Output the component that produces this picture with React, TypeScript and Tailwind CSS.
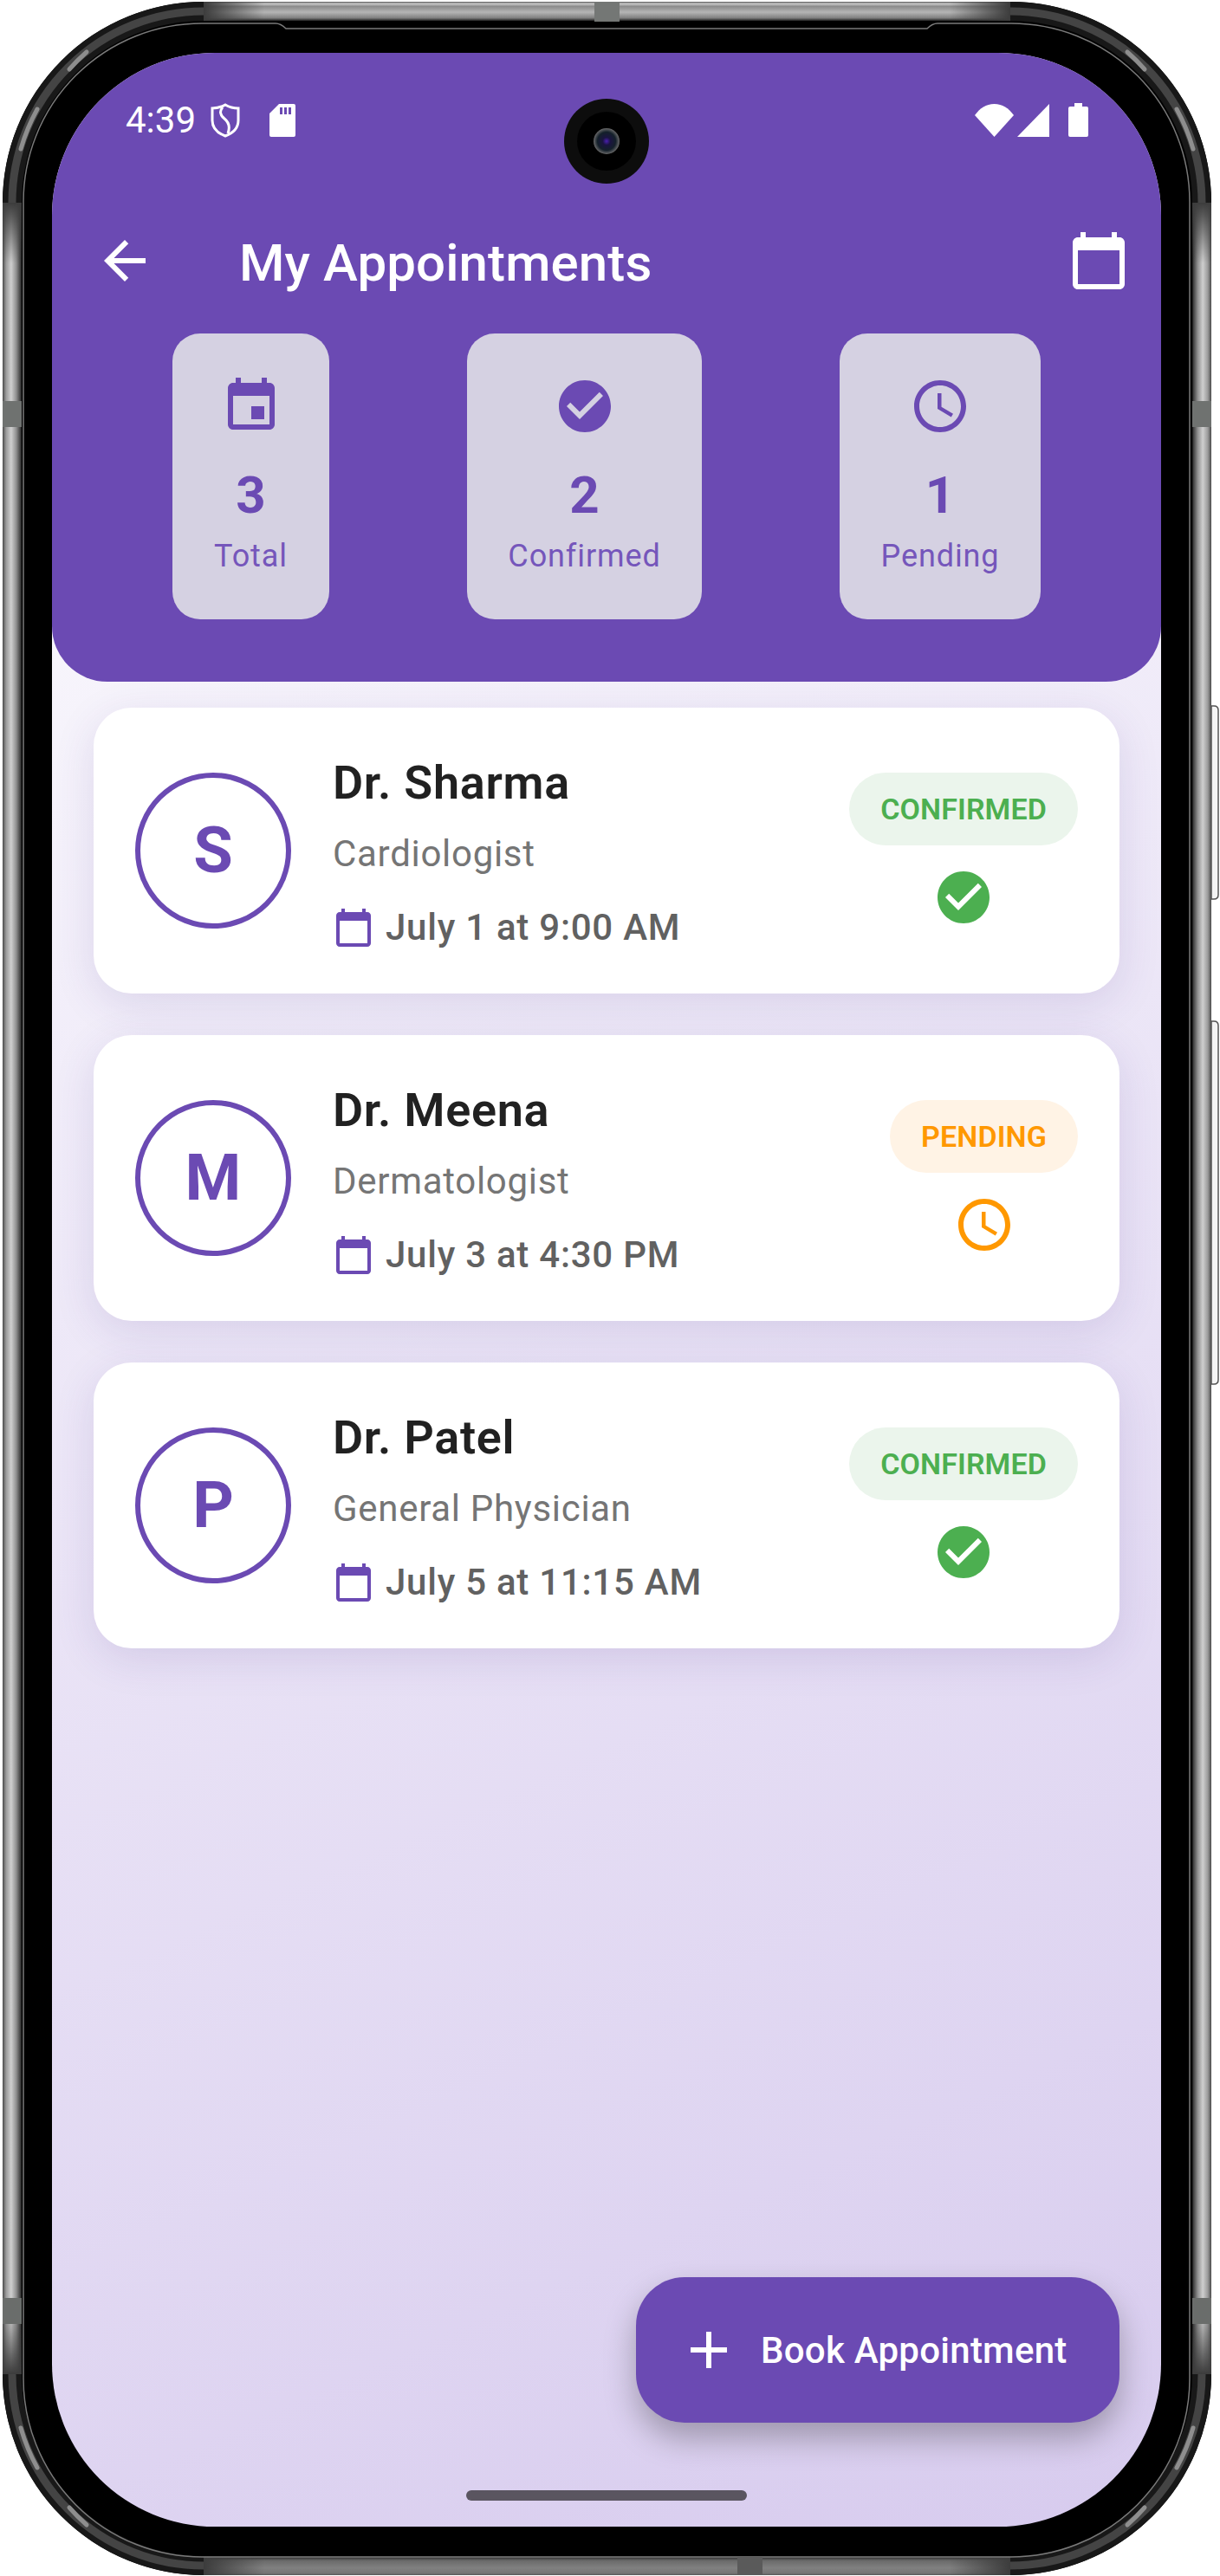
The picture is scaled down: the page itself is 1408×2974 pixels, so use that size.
import React from "react";

const P = {
  cal: "M20 3h-1V1h-2v2H7V1H5v2H4c-1.1 0-2 .9-2 2v16c0 1.1.9 2 2 2h16c1.1 0 2-.9 2-2V5c0-1.1-.9-2-2-2zm0 18H4V8h16v13z",
  event: "M17 12h-5v5h5v-5zM16 1v2H8V1H6v2H5c-1.11 0-1.99.9-1.99 2L3 19c0 1.1.89 2 2 2h14c1.1 0 2-.9 2-2V5c0-1.1-.9-2-2-2h-1V1h-2zm3 18H5V8h14v11z",
  check: "M12 2C6.48 2 2 6.48 2 12s4.48 10 10 10 10-4.48 10-10S17.52 2 12 2zm-2 15l-5-5 1.41-1.41L10 14.17l7.59-7.59L19 8l-9 9z",
  clock: "M11.99 2C6.47 2 2 6.48 2 12s4.47 10 9.99 10C17.52 22 22 17.52 22 12S17.52 2 11.99 2zM12 20c-4.42 0-8-3.58-8-8s3.58-8 8-8 8 3.58 8 8-3.58 8-8 8zm.5-13H11v6l5.25 3.15.75-1.23-4.5-2.67z",
  back: "M20 11H7.83l5.59-5.59L12 4l-8 8 8 8 1.41-1.41L7.83 13H20v-2z",
  add: "M19 13h-6v6h-2v-6H5v-2h6V5h2v6h6v2z",
};

function Icon({ d, size, className }: { d: string; size: number; className?: string }) {
  return (
    <svg width={size} height={size} viewBox="0 0 24 24" fill="currentColor" className={className}>
      <path d={d} />
    </svg>
  );
}

function Frame() {
  const corners = [
    "",
    "translate(1401 0) scale(-1 1)",
    "translate(0 2975) scale(1 -1)",
    "translate(1401 2975) scale(-1 -1)",
  ];
  const fade = "#3c3c3c";
  return (
    <svg width="1408" height="2974" viewBox="0 0 1408 2974" className="absolute left-0 top-0">
      <defs>
        <linearGradient id="hL" x1="0" x2="1" y1="0" y2="0">
          <stop offset="0" stopColor="#4a4a4a" />
          <stop offset="0.18" stopColor="#9a9a9a" />
          <stop offset="0.45" stopColor="#cfcfcf" />
          <stop offset="0.72" stopColor="#8f8f8f" />
          <stop offset="0.95" stopColor="#3a3a3a" />
          <stop offset="1" stopColor="#111111" />
        </linearGradient>
        <linearGradient id="hR" x1="1" x2="0" y1="0" y2="0">
          <stop offset="0" stopColor="#4a4a4a" />
          <stop offset="0.18" stopColor="#9a9a9a" />
          <stop offset="0.45" stopColor="#cfcfcf" />
          <stop offset="0.72" stopColor="#8f8f8f" />
          <stop offset="0.95" stopColor="#3a3a3a" />
          <stop offset="1" stopColor="#111111" />
        </linearGradient>
        <linearGradient id="vT" x1="0" x2="0" y1="0" y2="1">
          <stop offset="0" stopColor="#555555" />
          <stop offset="0.1" stopColor="#c8c8c8" />
          <stop offset="0.25" stopColor="#8c8c8c" />
          <stop offset="0.55" stopColor="#b5b5b5" />
          <stop offset="0.85" stopColor="#808080" />
          <stop offset="1" stopColor="#222222" />
        </linearGradient>
        <linearGradient id="vB" x1="0" x2="0" y1="0" y2="1">
          <stop offset="0" stopColor="#2a2a2a" />
          <stop offset="0.2" stopColor="#6a6a6a" />
          <stop offset="0.6" stopColor="#808080" />
          <stop offset="0.9" stopColor="#757575" />
          <stop offset="1" stopColor="#555555" />
        </linearGradient>
        <linearGradient id="fadeDown" x1="0" x2="0" y1="0" y2="1">
          <stop offset="0" stopColor={fade} />
          <stop offset="1" stopColor={fade} stopOpacity="0" />
        </linearGradient>
        <linearGradient id="fadeUp" x1="0" x2="0" y1="1" y2="0">
          <stop offset="0" stopColor={fade} />
          <stop offset="1" stopColor={fade} stopOpacity="0" />
        </linearGradient>
        <linearGradient id="fadeRight" x1="0" x2="1" y1="0" y2="0">
          <stop offset="0" stopColor={fade} />
          <stop offset="1" stopColor={fade} stopOpacity="0" />
        </linearGradient>
        <linearGradient id="fadeLeft" x1="1" x2="0" y1="0" y2="0">
          <stop offset="0" stopColor={fade} />
          <stop offset="1" stopColor={fade} stopOpacity="0" />
        </linearGradient>
        <radialGradient id="lens">
          <stop offset="0" stopColor="#4a1fb0" />
          <stop offset="0.3" stopColor="#1a1440" />
          <stop offset="0.7" stopColor="#14202a" />
          <stop offset="1" stopColor="#6a6a6a" />
        </radialGradient>
      </defs>
      <path d="M1398 815h3q5 0 5 5v213q0 5-5 5h-3z" fill="#f4f4f4" stroke="#555" strokeWidth="1.5" />
      <path d="M1398 1179h3q5 0 5 5v409q0 5-5 5h-3z" fill="#f4f4f4" stroke="#555" strokeWidth="1.5" />
      <rect x="3" y="2" width="1395" height="2971" rx="232" fill="#000000" />
      <rect x="14" y="13" width="1373" height="2949" rx="221" fill="none" stroke="#181818" strokeWidth="22" />
      <rect x="14" y="13" width="1373" height="2949" rx="221" fill="none" stroke="#444444" strokeWidth="9" />
      <rect x="3" y="234" width="22" height="2507" fill="url(#hL)" />
      <rect x="1376" y="234" width="22" height="2507" fill="url(#hR)" />
      <rect x="235" y="2" width="931" height="22" fill="url(#vT)" />
      <rect x="235" y="2952" width="931" height="21" fill="url(#vB)" />
      <rect x="3" y="234" width="22" height="70" fill="url(#fadeDown)" />
      <rect x="1376" y="234" width="22" height="70" fill="url(#fadeDown)" />
      <rect x="3" y="2671" width="22" height="70" fill="url(#fadeUp)" />
      <rect x="1376" y="2671" width="22" height="70" fill="url(#fadeUp)" />
      <rect x="235" y="2" width="70" height="22" fill="url(#fadeRight)" />
      <rect x="1096" y="2" width="70" height="22" fill="url(#fadeLeft)" />
      <rect x="235" y="2952" width="70" height="21" fill="url(#fadeRight)" />
      <rect x="1096" y="2952" width="70" height="21" fill="url(#fadeLeft)" />
      {corners.map((t) => (
        <g key={t} transform={t} fill="none" stroke="#8e8e8e" strokeWidth="5" strokeLinecap="round">
          <path d="M24 172 A221 221 0 0 1 43 126" />
          <path d="M80 80 A221 221 0 0 1 100 60" />
        </g>
      ))}
      <path
        d="M27 233A206 206 0 0 1 233 27H318Q324 27 330 33H1070Q1076 27 1082 27H1167A206 206 0 0 1 1373 233V2746A206 206 0 0 1 1167 2952H233A206 206 0 0 1 27 2746Z"
        fill="none"
        stroke="#7a7a7a"
        strokeWidth="1.5"
      />
      <rect x="686" y="2" width="29" height="23" fill="#747775" />
      <rect x="851" y="2952" width="29" height="21" fill="#5a5a5a" />
      <rect x="3" y="463" width="22" height="30" fill="#6f7270" />
      <rect x="1376" y="463" width="22" height="30" fill="#6f7270" />
      <rect x="3" y="2653" width="22" height="30" fill="#6a6d6b" />
      <rect x="1376" y="2653" width="22" height="30" fill="#6a6d6b" />
    </svg>
  );
}

function Stat({ icon, value, label, w }: { icon: string; value: string; label: string; w: string }) {
  return (
    <div className={`flex h-[330px] flex-col items-center rounded-[32px] bg-[#d5d1e2] pt-[48px] text-[#6b4ab3] ${w}`}>
      <Icon d={icon} size={72} />
      <div className="mt-[32px] text-[60px] font-bold leading-[70px]">{value}</div>
      <div className="mt-[14px] text-[36px] leading-[42px] tracking-[0.9px] text-[#7556bb]">{label}</div>
    </div>
  );
}

function Appointment({
  initial,
  name,
  spec,
  date,
  status,
}: {
  initial: string;
  name: string;
  spec: string;
  date: string;
  status: "CONFIRMED" | "PENDING";
}) {
  const ok = status === "CONFIRMED";
  return (
    <div className="flex h-[330px] items-center rounded-[44px] bg-white px-[48px] shadow-[0_12px_48px_rgba(70,50,140,0.13)]">
      <div className="flex h-[180px] w-[180px] shrink-0 items-center justify-center rounded-full border-[6px] border-[#6b4ab3] text-[74px] font-bold leading-none text-[#6b4ab3]">
        {initial}
      </div>
      <div className="ml-[48px] flex h-[234px] flex-1 flex-col">
        <div className="mt-[7px] text-[54px] font-semibold leading-[63px] tracking-[0.7px] text-[#212121]">{name}</div>
        <div className="mt-[26px] text-[42px] leading-[49px] tracking-[0.7px] text-[#757575]">{spec}</div>
        <div className="mt-[36px] flex items-center text-[42px] font-medium leading-[49px] tracking-[0.75px] text-[#616161]">
          <Icon d={P.cal} size={48} className="mr-[13px] text-[#6b4ab3]" />
          {date}
        </div>
      </div>
      <div className="flex flex-col items-center">
        <div
          className={`flex h-[84px] items-center rounded-[42px] px-[36px] text-[34px] font-semibold tracking-[0.1px] ${
            ok ? "bg-[#ebf5ec] text-[#4caf50]" : "bg-[#fff3e5] text-[#ff9800]"
          }`}
        >
          {status}
        </div>
        <Icon d={ok ? P.check : P.clock} size={72} className={`mt-[24px] ${ok ? "text-[#4caf50]" : "text-[#ff9800]"}`} />
      </div>
    </div>
  );
}

export default function App() {
  return (
    <div className="relative h-[2974px] w-[1408px] overflow-hidden bg-white font-['Roboto',sans-serif]">
      <Frame />
      <div className="relative pl-[60px] pt-[61px]">
        <div className="relative flex h-[2856px] w-[1280px] flex-col overflow-hidden rounded-[188px] bg-[linear-gradient(155.9deg,#ffffff_0%,#d7cbee_100%)]">
          <div className="h-[726px] shrink-0 rounded-b-[64px] bg-[#6b4ab3] text-white">
            <div className="flex h-[204px] items-start justify-between pl-[85px] pr-[84px] pt-[58px]">
              <div className="-mt-[5px] flex items-center">
                <span className="text-[42px] leading-[49px]">4:39</span>
                <svg width="34" height="40" viewBox="0 0 34 40" className="ml-[17px]" fill="none" stroke="white" strokeWidth="3">
                  <path d="M17 2c5 3 10 4 15 4v14c0 9-7 15-15 18C9 35 2 29 2 20V6c5 0 10-1 15-4z" />
                  <path d="M14 5c-4 4-3 9 2 13 5 4 7 9 4 17" />
                </svg>
                <svg width="30" height="38" viewBox="0 0 30 38" className="ml-[34px]">
                  <path
                    fill="white"
                    fillRule="evenodd"
                    d="M11 0h17a2 2 0 0 1 2 2v34a2 2 0 0 1-2 2H2a2 2 0 0 1-2-2V11zM12 4v8h3V4zM17 4v8h3V4zM22 4v8h3V4z"
                  />
                </svg>
              </div>
              <div className="flex items-center">
                <svg width="45" height="38" viewBox="0 0 45 38">
                  <path fill="white" d="M0 13C6 5 13 0 22.5 0S39 5 45 13L22.5 38z" />
                </svg>
                <svg width="37" height="38" viewBox="0 0 37 38" className="ml-[4px]">
                  <path fill="white" d="M37 0v38H0z" />
                </svg>
                <svg width="23" height="39" viewBox="0 0 23 39" className="ml-[22px]">
                  <path fill="white" d="M7 0h9v4h5a2 2 0 0 1 2 2v31a2 2 0 0 1-2 2H2a2 2 0 0 1-2-2V6a2 2 0 0 1 2-2h5z" />
                </svg>
              </div>
            </div>
            <div className="flex h-[72px] items-center pl-[48px] pr-[36px]">
              <Icon d={P.back} size={72} />
              <div className="ml-[96px] mt-[6px] flex-1 text-[60px] font-medium leading-[72px] tracking-[0.1px]">My Appointments</div>
              <Icon d={P.cal} size={72} />
            </div>
            <div className="mt-[48px] flex justify-between px-[139px]">
              <Stat icon={P.event} value="3" label="Total" w="w-[181px]" />
              <Stat icon={P.check} value="2" label="Confirmed" w="w-[271px]" />
              <Stat icon={P.clock} value="1" label="Pending" w="w-[232px]" />
            </div>
          </div>
          <div className="mt-[30px] flex flex-col gap-[48px] px-[48px]">
            <Appointment initial="S" name="Dr. Sharma" spec="Cardiologist" date="July 1 at 9:00 AM" status="CONFIRMED" />
            <Appointment initial="M" name="Dr. Meena" spec="Dermatologist" date="July 3 at 4:30 PM" status="PENDING" />
            <Appointment initial="P" name="Dr. Patel" spec="General Physician" date="July 5 at 11:15 AM" status="CONFIRMED" />
          </div>
          <div className="absolute bottom-[120px] right-[48px] flex h-[168px] w-[558px] items-center rounded-[56px] bg-[#6b4ab3] pl-[48px] text-white shadow-[0_18px_36px_rgba(0,0,0,0.28)]">
            <Icon d={P.add} size={72} />
            <span className="ml-[24px] text-[42px] font-medium tracking-[0.25px]">Book Appointment</span>
          </div>
          <div className="absolute bottom-[30px] left-[478px] h-[12px] w-[324px] rounded-full bg-[#5a5560]" />
          <svg width="98" height="98" viewBox="0 0 98 98" className="absolute left-[591px] top-[53px]">
            <circle cx="49" cy="49" r="49" fill="#0d0d0d" />
            <circle cx="49" cy="49" r="34" fill="#000000" />
            <circle cx="49" cy="49" r="15" fill="url(#lens)" />
          </svg>
        </div>
      </div>
    </div>
  );
}
